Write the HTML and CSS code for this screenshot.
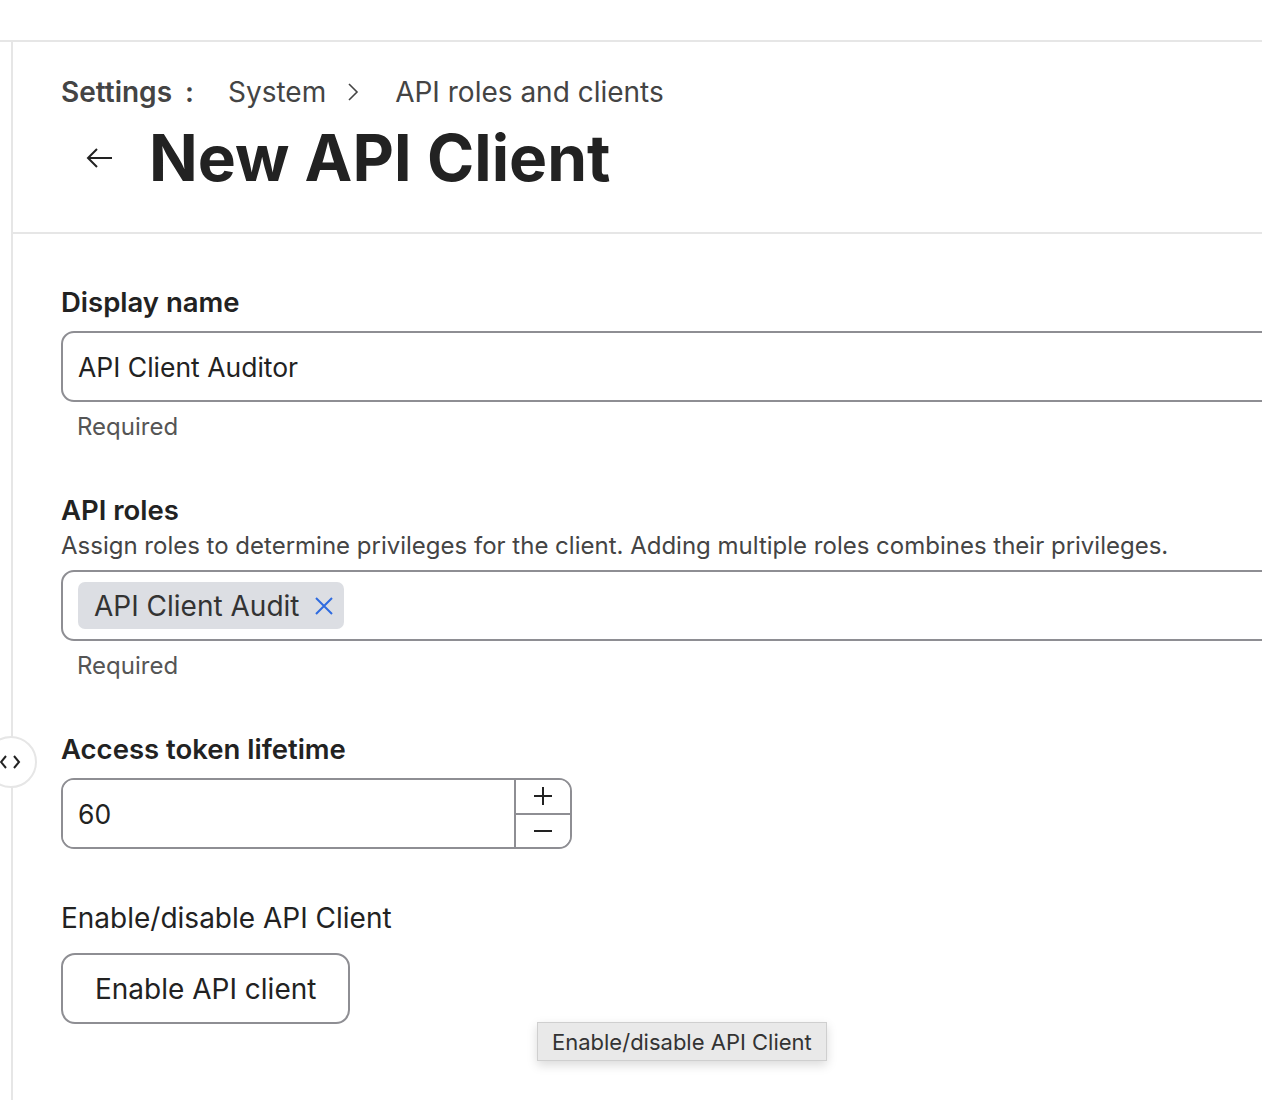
FILE: index.html
```html
<!DOCTYPE html>
<html>
<head>
	<meta charset="UTF-8">
	<meta name="viewport" content="width=device-width, initial-scale=1.0">
	<title>New API Client</title>
<link rel="stylesheet" href="styles.css">
</head>
<body>
	<div class="topbar"></div>
	<div class="layout">
		<div class="sidebar"></div>
		<div class="main">
			<div class="page-header">
				<div class="breadcrumb">
					<span class="crumb-root">Settings</span>
					<span class="crumb-dots">:</span>
					<span class="crumb">System</span>
					<svg class="crumb-chevron" width="14" height="20" viewBox="0 0 14 20"><path d="M3 2 L11 10 L3 18" fill="none" stroke="#444" stroke-width="1.6"/></svg>
					<span class="crumb">API roles and clients</span>
				</div>
				<div class="title-row">
					<svg class="back" width="28" height="24" viewBox="0 0 28 24"><path d="M26 12 H2 M11 3 L2 12 L11 21" fill="none" stroke="#222" stroke-width="2"/></svg>
					<h1>New API Client</h1>
				</div>
			</div>

			<form class="form">
				<div class="field">
					<label class="field-label" for="displayName">Display name</label>
					<input type="text" class="text-input" id="displayName" value="API Client Auditor">
					<div class="hint">Required</div>
				</div>

				<div class="field">
					<div class="field-label">API roles</div>
					<div class="field-desc">Assign roles to determine privileges for the client. Adding multiple roles combines their privileges.</div>
					<div class="multi-input">
						<span class="chip">API Client Audit
							<svg class="chip-x" width="20" height="20" viewBox="0 0 20 20"><path d="M2 2 L18 18 M18 2 L2 18" fill="none" stroke="#2f6be0" stroke-width="2"/></svg>
						</span>
					</div>
					<div class="hint">Required</div>
				</div>

				<div class="field">
					<label class="field-label" for="lifetime">Access token lifetime</label>
					<div class="number-input">
						<input type="text" id="lifetime" value="60">
						<div class="stepper">
							<button type="button" class="step">
								<svg width="20" height="20" viewBox="0 0 20 20"><path d="M10 1 V19 M1 10 H19" fill="none" stroke="#222" stroke-width="2"/></svg>
							</button>
							<button type="button" class="step">
								<svg width="20" height="20" viewBox="0 0 20 20"><path d="M1 10 H19" fill="none" stroke="#222" stroke-width="2"/></svg>
							</button>
						</div>
					</div>
				</div>

				<div class="field">
					<div class="plain-label">Enable/disable API Client</div>
					<button type="button" class="outline-button">Enable API client</button>
				</div>
			</form>
		</div>
	</div>

	<div class="drawer-toggle">
		<svg width="22" height="14" viewBox="0 0 22 14"><path d="M7 1 L2 7 L7 13 M15 1 L20 7 L15 13" fill="none" stroke="#222" stroke-width="2"/></svg>
	</div>
	<div class="tooltip">Enable/disable API Client</div>
</body>
</html>
```

FILE: styles.css
```css
body {
	margin: 0;
	font-family: Inter, "Noto Sans", sans-serif;
	color: #222;
	background: white;
	overflow: hidden;
	height: 1100px;
}
.topbar {
	height: 40px;
	border-bottom: 2px solid #e6e6e6;
}
.layout {
	display: flex;
	height: 1058px;
}
.sidebar {
	width: 11px;
	flex-shrink: 0;
	border-right: 2px solid #e6e6e6;
}
.main {
	flex: 1;
	min-width: 0;
}
.page-header {
	padding: 34px 0 38px 48px;
	border-bottom: 2px solid #e6e6e6;
}
.breadcrumb {
	display: flex;
	align-items: center;
	font-size: 28px;
	line-height: 32px;
	color: #444;
}
.crumb-root {
	font-weight: 600;
}
.crumb-dots {
	font-weight: 600;
	margin: 0 34px 0 13px;
}
.crumb-chevron {
	margin: 0 35px 0 20px;
}
.title-row {
	display: flex;
	align-items: center;
	margin-top: 14px;
}
.back {
	margin: 0 35px 0 25px;
}
h1 {
	margin: 0;
	font-size: 64px;
	line-height: 72px;
	font-weight: 700;
	color: #222;
}
.form {
	padding: 52px 0 0 48px;
}
.field {
	margin-bottom: 53px;
}
.field-label {
	display: block;
	font-size: 27.5px;
	line-height: 32px;
	font-weight: 600;
	color: #222;
}
.field-desc {
	margin-top: 4px;
	font-size: 24px;
	line-height: 32px;
	color: #444;
}
.text-input,
.multi-input {
	display: block;
	box-sizing: border-box;
	width: calc(100% + 60px);
	height: 71px;
	border: 2px solid #8e8e93;
	border-radius: 13px;
	outline: none;
	font-family: inherit;
	font-size: 26.5px;
	color: #222;
	padding: 0 15px;
}
.text-input {
	margin-top: 13px;
}
.multi-input {
	margin-top: 8px;
	display: flex;
	align-items: center;
}
.chip {
	display: inline-flex;
	align-items: center;
	height: 47px;
	padding: 0 10px 0 16px;
	background: #dcdee3;
	border-radius: 7px;
	font-size: 28px;
	color: #333;
}
.chip-x {
	margin-left: 15px;
}
.hint {
	margin-top: 11px;
	padding-left: 16px;
	font-size: 24px;
	line-height: 28px;
	color: #555;
}
.number-input {
	margin-top: 13px;
	display: flex;
	box-sizing: border-box;
	width: 511px;
	height: 71px;
	border: 2px solid #8e8e93;
	border-radius: 13px;
	overflow: hidden;
}
.number-input input {
	flex: 1;
	min-width: 0;
	border: none;
	outline: none;
	font-family: inherit;
	font-size: 26.5px;
	color: #222;
	padding: 0 15px;
}
.stepper {
	width: 54px;
	display: flex;
	flex-direction: column;
	border-left: 2px solid #8e8e93;
}
.step {
	flex: 1;
	display: flex;
	align-items: center;
	justify-content: center;
	background: white;
	border: none;
	padding: 0;
}
.step + .step {
	border-top: 2px solid #8e8e93;
}
.plain-label {
	font-size: 28px;
	line-height: 32px;
	color: #222;
}
.outline-button {
	margin-top: 19px;
	height: 71px;
	padding: 0 32px;
	background: white;
	border: 2px solid #8e8e93;
	border-radius: 14px;
	font-family: inherit;
	font-size: 28px;
	color: #222;
}
.drawer-toggle {
	position: absolute;
	left: -15px;
	top: 736px;
	width: 48px;
	height: 48px;
	border: 2px solid #e6e6e6;
	border-radius: 50%;
	background: white;
	display: flex;
	align-items: center;
	justify-content: flex-end;
}
.drawer-toggle svg {
	margin-right: 14px;
}
.tooltip {
	position: absolute;
	left: 537px;
	top: 1022px;
	box-sizing: border-box;
	height: 39px;
	padding: 0 14px;
	display: flex;
	align-items: center;
	background: #e9e9e9;
	border: 1px solid #cfcfcf;
	box-shadow: 0 4px 10px rgba(0, 0, 0, 0.15);
	font-size: 22px;
	color: #333;
}
```
